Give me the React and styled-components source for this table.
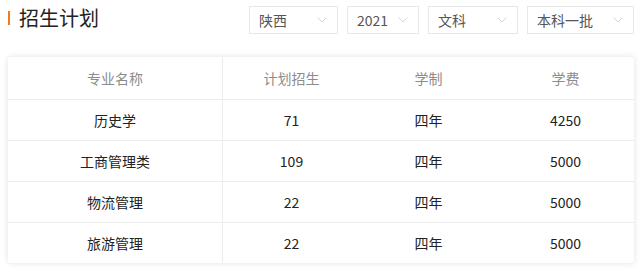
import React from "react";
import styled, { createGlobalStyle } from "styled-components";

const GlobalStyle = createGlobalStyle`
  body {
    margin: 0;
    background: #fff;
    font-family: "Microsoft YaHei", "Noto Sans CJK SC", "Liberation Sans", sans-serif;
  }
`;

const Wrap = styled.div`
  width: 643px;
  height: 272px;
  padding: 6px 9px 0 8px;
  box-sizing: border-box;
`;

const TopBar = styled.div`
  display: flex;
  align-items: center;
  justify-content: space-between;
  height: 28px;
`;

const Title = styled.h2`
  margin: 0;
  display: flex;
  align-items: center;
  gap: 9px;
  font-size: 20px;
  font-weight: normal;
  color: #222;
  line-height: 1;
  margin-top: -4px;
  &::before {
    content: "";
    width: 2px;
    height: 14px;
    background: #f27b21;
  }
`;

const Filters = styled.div`
  display: flex;
  gap: 9px;
`;

const Select = styled.div`
  width: ${(p) => p.w}px;
  height: 28px;
  box-sizing: border-box;
  border: 1px solid #e8e8e8;
  display: flex;
  align-items: center;
  justify-content: space-between;
  padding: 0 10px 0 9px;
  font-size: 14px;
  color: #555;
`;

const Chevron = () => (
  <svg width="10" height="6" viewBox="0 0 10 6">
    <path d="M0.5 0.5 L5 5 L9.5 0.5" fill="none" stroke="#d0d0d0" strokeWidth="0.9" />
  </svg>
);

const Table = styled.div`
  margin-top: 23px;
  width: 626px;
  border-radius: 3px;
  box-shadow: 0 0 6px rgba(0, 0, 0, 0.12);
  background: #fff;
  overflow: hidden;
`;

const Row = styled.div`
  display: grid;
  grid-template-columns: 215px 137px 137px 137px;
  height: ${(p) => (p.head ? 42 : 41)}px;
  border-top: ${(p) => (p.head ? "none" : "1px solid #ececec")};
  box-sizing: border-box;
`;

const Cell = styled.div`
  display: flex;
  align-items: center;
  justify-content: center;
  font-size: 14px;
  color: ${(p) => (p.head ? "#8c8c8c" : "#222")};
  border-right: ${(p) => (p.first ? "1px solid #ececec" : "none")};
`;

const rows = [
  ["历史学", "71", "四年", "4250"],
  ["工商管理类", "109", "四年", "5000"],
  ["物流管理", "22", "四年", "5000"],
  ["旅游管理", "22", "四年", "5000"],
];

const head = ["专业名称", "计划招生", "学制", "学费"];

export default function App() {
  return (
    <Wrap>
      <GlobalStyle />
      <TopBar>
        <Title>招生计划</Title>
        <Filters>
          <Select w={89}>陕西<Chevron /></Select>
          <Select w={72}>2021<Chevron /></Select>
          <Select w={90}>文科<Chevron /></Select>
          <Select w={107}>本科一批<Chevron /></Select>
        </Filters>
      </TopBar>
      <Table>
        <Row head>
          {head.map((h, i) => (
            <Cell key={h} head first={i === 0}>{h}</Cell>
          ))}
        </Row>
        {rows.map((r, ri) => (
          <Row key={ri}>
            {r.map((c, i) => (
              <Cell key={i} first={i === 0}>{c}</Cell>
            ))}
          </Row>
        ))}
      </Table>
    </Wrap>
  );
}
